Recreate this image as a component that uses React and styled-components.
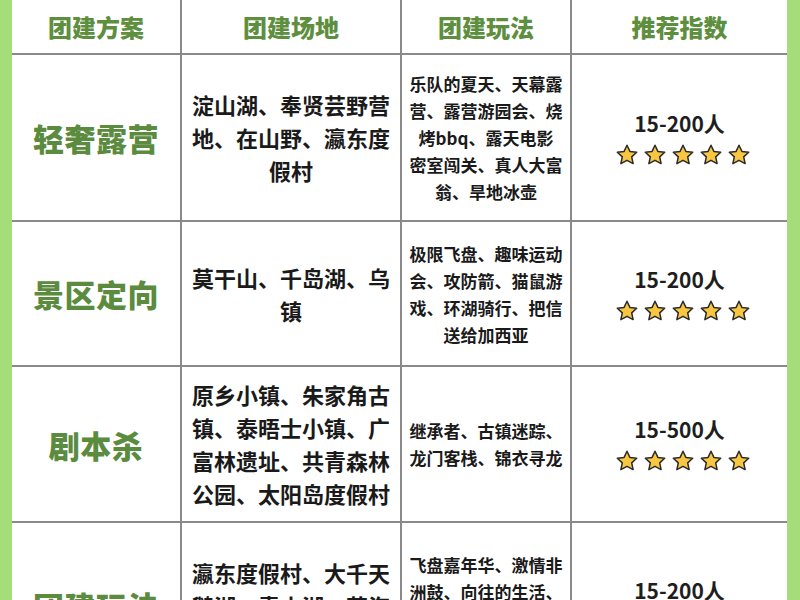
import styled, { createGlobalStyle } from 'styled-components';

const GlobalStyle = createGlobalStyle`
  html, body {
    margin: 0;
    padding: 0;
    background: #a6dd7b;
    overflow: hidden;
  }
  body {
    font-family: "Noto Sans CJK SC", "Noto Sans", sans-serif;
  }
`;

const Page = styled.div`
  height: 600px;
  padding: 0 13px 0 12px;
  overflow: hidden;
`;

const Table = styled.table`
  width: 775px;
  background: #fff;
  border-collapse: collapse;
  table-layout: fixed;
`;

const HeadCell = styled.th`
  height: 53px;
  padding: 0;
  color: #5e8f3f;
  font-size: 24px;
  font-weight: 900;
  text-align: center;
  vertical-align: middle;
  border-bottom: 2px solid #8a8a8a;
  border-left: 2px solid #8a8a8a;

  &:first-child {
    border-left: none;
  }
`;

const Row = styled.tr`
  height: ${({ $h }) => $h}px;
`;

const Cell = styled.td`
  padding: 0 ${({ $pad }) => $pad || 0}px;
  text-align: center;
  vertical-align: middle;
  border-bottom: 2px solid #8a8a8a;
  border-left: 2px solid #8a8a8a;

  &:first-child {
    border-left: none;
  }
`;

const Title = styled.div`
  color: #5b8b3e;
  font-size: 31px;
  font-weight: 900;
  letter-spacing: 0.5px;
`;

const Lines = styled.div`
  color: #1a1a1a;
  font-weight: 700;
  font-size: ${({ $size }) => $size}px;
  line-height: ${({ $lh }) => $lh}px;
  white-space: nowrap;

  span {
    display: block;
  }
`;

const Count = styled.div`
  color: #1e1e1e;
  font-size: 21px;
  font-weight: 700;
  line-height: 28px;
`;

const Stars = styled.div`
  display: flex;
  justify-content: center;
  gap: 4px;
  margin-top: 6px;
  padding-left: 6px;
`;

function Star() {
  return (
    <svg width="24" height="24" viewBox="0 0 24 24">
      <path
        d="M12 2.2l2.9 6.2 6.8.8-5 4.7 1.4 6.7L12 17.3l-6.1 3.3 1.4-6.7-5-4.7 6.8-.8z"
        fill="#f8c640"
        stroke="#2a2a2a"
        strokeWidth="1.5"
        strokeLinejoin="round"
      />
    </svg>
  );
}

const rows = [
  {
    h: 167,
    title: '轻奢露营',
    venues: ['淀山湖、奉贤芸野营', '地、在山野、瀛东度', '假村'],
    plays: ['乐队的夏天、天幕露', '营、露营游园会、烧', '烤bbq、露天电影', '密室闯关、真人大富', '翁、旱地冰壶'],
    count: '15-200人',
  },
  {
    h: 145,
    title: '景区定向',
    venues: ['莫干山、千岛湖、乌', '镇'],
    plays: ['极限飞盘、趣味运动', '会、攻防箭、猫鼠游', '戏、环湖骑行、把信', '送给加西亚'],
    count: '15-200人',
  },
  {
    h: 156,
    title: '剧本杀',
    venues: ['原乡小镇、朱家角古', '镇、泰晤士小镇、广', '富林遗址、共青森林', '公园、太阳岛度假村'],
    plays: ['继承者、古镇迷踪、', '龙门客栈、锦衣寻龙'],
    count: '15-500人',
  },
  {
    h: 166,
    title: '团建玩法',
    venues: ['瀛东度假村、大千天', '鹅湖、青山湖、花海', '山庄'],
    plays: ['飞盘嘉年华、激情非', '洲鼓、向往的生活、', '荒野求生、丛林穿越', '篝火晚会'],
    count: '15-200人',
  },
];

export default function App() {
  return (
    <Page>
      <GlobalStyle />
      <Table>
        <colgroup>
          <col style={{ width: 169 }} />
          <col style={{ width: 220 }} />
          <col style={{ width: 170 }} />
          <col style={{ width: 216 }} />
        </colgroup>
        <thead>
          <tr>
            <HeadCell>团建方案</HeadCell>
            <HeadCell>团建场地</HeadCell>
            <HeadCell>团建玩法</HeadCell>
            <HeadCell>推荐指数</HeadCell>
          </tr>
        </thead>
        <tbody>
          {rows.map((r) => (
            <Row key={r.title} $h={r.h}>
              <Cell>
                <Title>{r.title}</Title>
              </Cell>
              <Cell $pad={8}>
                <Lines $size={22} $lh={33}>
                  {r.venues.map((l) => (
                    <span key={l}>{l}</span>
                  ))}
                </Lines>
              </Cell>
              <Cell $pad={6}>
                <Lines $size={17} $lh={27}>
                  {r.plays.map((l) => (
                    <span key={l}>{l}</span>
                  ))}
                </Lines>
              </Cell>
              <Cell>
                <Count>{r.count}</Count>
                <Stars>
                  {[0, 1, 2, 3, 4].map((i) => (
                    <Star key={i} />
                  ))}
                </Stars>
              </Cell>
            </Row>
          ))}
        </tbody>
      </Table>
    </Page>
  );
}
